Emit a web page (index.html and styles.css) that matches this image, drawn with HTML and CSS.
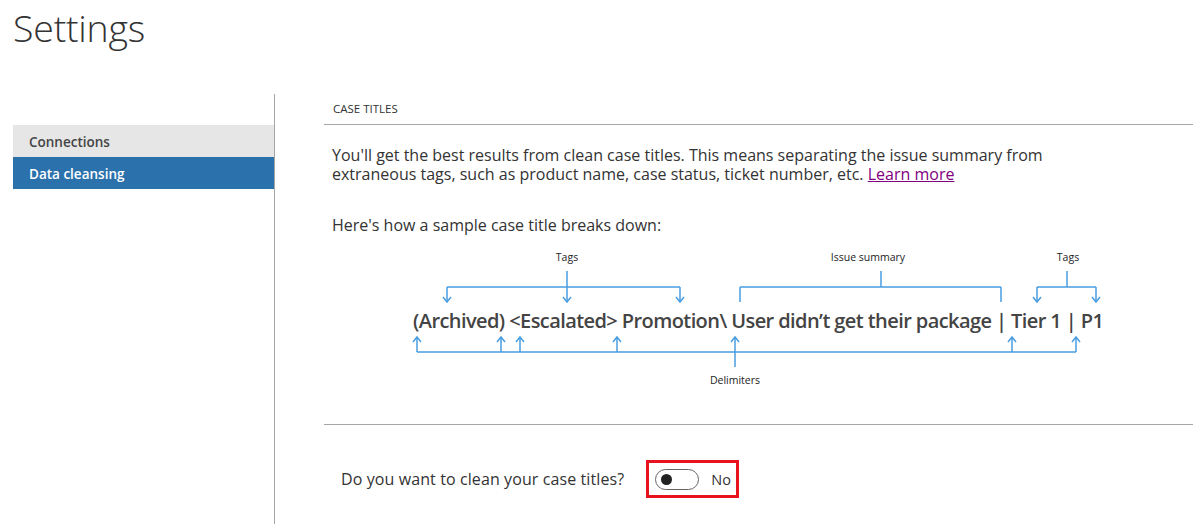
FILE: index.html
```html
<!DOCTYPE html>
<html lang="en">
<head>
<meta charset="utf-8">
<title>Settings</title>
<link rel="stylesheet" href="styles.css">
</head>
<body>
<header class="page-header">
  <h1 class="page-title">Settings</h1>
</header>
<div class="layout">
  <nav class="sidebar">
    <ul class="nav-list">
      <li class="nav-item">Connections</li>
      <li class="nav-item nav-item-active">Data cleansing</li>
    </ul>
  </nav>
  <main class="main">
    <div class="section-head">CASE TITLES</div>
    <p class="intro">You'll get the best results from clean case titles. This means separating the issue summary from extraneous tags, such as product name, case status, ticket number, etc. <a class="link" href="#">Learn more</a></p>
    <p class="sample-label">Here's how a sample case title breaks down:</p>
    <svg class="diagram" width="869" height="150" viewBox="0 0 869 150" xmlns="http://www.w3.org/2000/svg">
      <g class="brackets" fill="none" stroke="#4a9ddf" stroke-width="1.5">
        <path d="M243 26V42M123 42H356M123 42V57M243 42V57M356 42V57"/>
        <path d="M119 52L123 57L127 52M239 52L243 57L247 52M352 52L356 57L360 52"/>
        <path d="M557 26V42M416 42H677M416 42V57M677 42V57"/>
        <path d="M743 26V42M713 42H772M713 42V57M772 42V57"/>
        <path d="M709 52L713 57L717 52M768 52L772 57L776 52"/>
        <path d="M93 107H752M93 107V92M177 107V92M196 107V92M293 107V92M411 107V92M688 107V92M752 107V92M411 107V122"/>
        <path d="M89 97L93 92L97 97M173 97L177 92L181 97M192 97L196 92L200 97M289 97L293 92L297 97M407 97L411 92L415 97M684 97L688 92L692 97M748 97L752 92L756 97"/>
      </g>
      <g class="labels">
        <text x="243" y="16" text-anchor="middle">Tags</text>
        <text x="544" y="16" text-anchor="middle">Issue summary</text>
        <text x="744" y="16" text-anchor="middle">Tags</text>
        <text x="411" y="139" text-anchor="middle">Delimiters</text>
      </g>
      <text class="sample" x="89" y="83" textLength="691" lengthAdjust="spacing">(Archived) &lt;Escalated&gt; Promotion\ User didn’t get their package | Tier 1 | P1</text>
    </svg>
    <hr class="divider">
    <div class="question-row">
      <span class="question">Do you want to clean your case titles?</span>
      <div class="toggle-box">
        <span class="toggle"><span class="knob"></span></span>
        <span class="toggle-label">No</span>
      </div>
    </div>
  </main>
</div>
</body>
</html>
```
FILE: styles.css
```css
* { box-sizing: border-box; }
html, body { margin: 0; padding: 0; background: #fff; }
body {
  font-family: "Open Sans", "Noto Sans", "Liberation Sans", sans-serif;
  color: #333;
  width: 1201px;
  height: 524px;
  overflow: hidden;
}
.page-header { height: 94px; padding: 0 0 0 13px; }
.page-title {
  margin: 0;
  padding-top: 4px;
  font-weight: 300;
  font-size: 37.5px;
  line-height: 48px;
  color: #333;
  letter-spacing: -0.2px;
}
.layout { display: flex; height: 430px; }
.sidebar {
  width: 275px;
  border-right: 1px solid #a6a6a6;
  padding: 31px 0 0 13px;
}
.nav-list { list-style: none; margin: 0; padding: 0; }
.nav-item {
  height: 32px;
  line-height: 34px;
  padding-left: 16px;
  font-size: 13.5px;
  font-weight: 600;
  background: #e6e6e6;
  color: #444;
}
.nav-item-active { background: #2b72ad; color: #fff; }
.main { flex: 1; padding-left: 49px; padding-right: 8px; }
.section-head {
  height: 31px;
  border-bottom: 1px solid #a6a6a6;
  padding: 7px 0 0 9px;
  font-size: 11.5px;
  line-height: 16px;
  color: #333;
}
.intro {
  margin: 21px 0 0 0;
  padding: 0 0 0 8px;
  max-width: 760px;
  font-size: 16px;
  line-height: 19px;
  color: #333;
}
.link { color: #800080; text-decoration: underline; }
.sample-label {
  margin: 32px 0 0 0;
  padding-left: 8px;
  font-size: 16px;
  line-height: 19px;
}
.diagram { display: block; margin-top: 10px; }
.labels text { font-size: 10.5px; fill: #222; font-family: "Open Sans", "Noto Sans", sans-serif; }
.sample { font-size: 20px; font-weight: 600; fill: #444; font-family: "Open Sans", "Noto Sans", sans-serif; }
.divider { margin: 29px 0 0 0; border: 0; border-top: 1px solid #a6a6a6; height: 0; }
.question-row {
  display: flex;
  align-items: center;
  margin-top: 35px;
  padding-left: 17px;
}
.question { font-size: 16px; color: #333; letter-spacing: 0.1px; }
.toggle-box {
  display: flex;
  align-items: center;
  margin-left: 22px;
  width: 93px;
  height: 38px;
  border: 3px solid #e8131f;
  padding-left: 6px;
}
.toggle {
  display: flex;
  align-items: center;
  width: 44px;
  height: 21px;
  border: 1px solid #666;
  border-radius: 11px;
  padding-left: 5px;
}
.knob { width: 11px; height: 11px; border-radius: 50%; background: #222; }
.toggle-label { margin-left: 12px; font-size: 14.5px; color: #333; }
```
